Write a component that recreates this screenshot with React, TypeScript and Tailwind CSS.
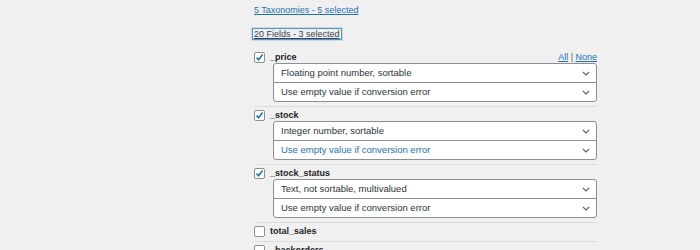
const FONT = { fontFamily: '"Liberation Sans", Arial, sans-serif' };

interface Field {
  name: string;
  checked: boolean;
  type?: string;
  onError?: string;
  focused?: boolean;
}

const FIELDS: Field[] = [
  { name: '_price', checked: true, type: 'Floating point number, sortable', onError: 'Use empty value if conversion error' },
  { name: '_stock', checked: true, type: 'Integer number, sortable', onError: 'Use empty value if conversion error', focused: true },
  { name: '_stock_status', checked: true, type: 'Text, not sortable, multivalued', onError: 'Use empty value if conversion error' },
  { name: 'total_sales', checked: false },
  { name: '_backorders', checked: false },
];

function Chevron() {
  return (
    <svg width="8" height="5" viewBox="0 0 8 5" className="shrink-0">
      <path d="M0.8 0.8 L4 3.9 L7.2 0.8" fill="none" stroke="#50575e" strokeWidth="1.1" />
    </svg>
  );
}

function Checkbox({ checked }: { checked: boolean }) {
  return (
    <span className="flex h-[11px] w-[11px] shrink-0 items-center justify-center rounded-[2px] border border-[#8c8f94] bg-white">
      {checked && (
        <svg width="9" height="9" viewBox="0 0 9 9">
          <path d="M1.6 4.6 L3.6 6.7 L7.6 1.6" fill="none" stroke="#2271b1" strokeWidth="1.6" />
        </svg>
      )}
    </span>
  );
}

function Select({ value, focused, first }: { value: string; focused?: boolean; first?: boolean }) {
  return (
    <div
      className={`flex h-[20px] items-center justify-between border border-[#8c8f94] bg-white pl-[7px] pr-[6px] text-[9.5px] ${
        first ? 'rounded-t-[3px]' : '-mt-px rounded-b-[3px]'
      } ${focused ? 'text-[#2271b1]' : 'text-[#2c3338]'}`}
    >
      <span>{value}</span>
      <Chevron />
    </div>
  );
}

export default function App() {
  return (
    <div className="min-h-screen bg-[#f0f0f1]" style={FONT}>
      <div className="ml-[254px] w-[343px] pt-[4px]">
        <div className="h-[12px] text-[9px] leading-[12px]">
          <a className="text-[#2271b1] underline">5 Taxonomies - 5 selected</a>
        </div>

        <div className="mt-[12px] h-[12px] text-[9px] leading-[12px]">
          <a className="-ml-[2px] border border-[#4f94d4] px-[1px] text-[#3c434a] underline shadow-[0_0_0_1px_rgba(79,148,212,0.25)]">
            20 Fields - 3 selected
          </a>
        </div>

        <div className="mt-[9px]">
          {FIELDS.map((f, i) => (
            <div key={f.name} className="ml-px border-b border-[#dcdcde] pt-[3px] pb-[4px]">
              <div className="-ml-px flex h-[11px] items-center text-[9px] font-bold text-[#1d2327]">
                <Checkbox checked={f.checked} />
                <span className="ml-[5px]">{f.name}</span>
                {i === 0 && (
                  <span className="ml-auto font-normal text-[#50575e]">
                    <a className="text-[#2271b1] underline">All</a> | <a className="text-[#2271b1] underline">None</a>
                  </span>
                )}
              </div>
              {f.type && (
                <div className="ml-[18px]">
                  <Select value={f.type} first />
                  <Select value={f.onError!} focused={f.focused} />
                </div>
              )}
            </div>
          ))}
        </div>
      </div>
    </div>
  );
}
